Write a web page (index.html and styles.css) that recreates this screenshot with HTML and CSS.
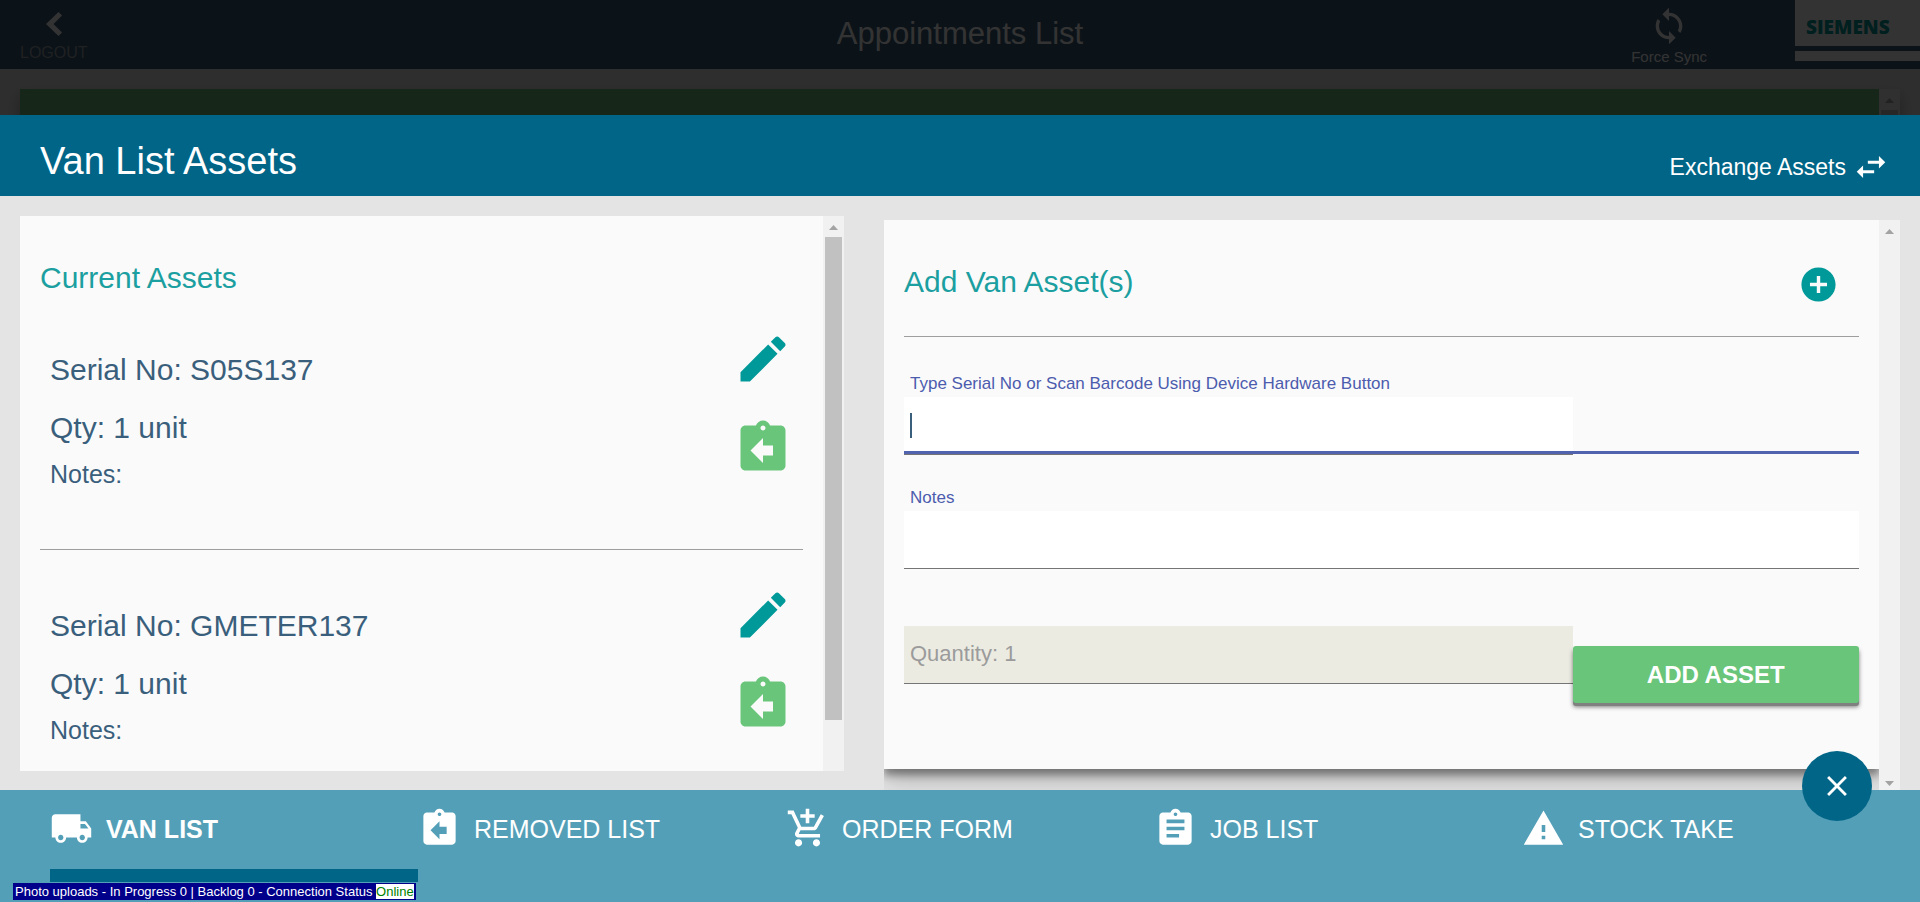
FILE: index.html
```html
<!DOCTYPE html>
<html lang="en">
<head>
<meta charset="utf-8">
<title>Van List Assets</title>
<link rel="stylesheet" href="styles.css">
</head>
<body>
<svg class="sprite" aria-hidden="true">
  <symbol id="i-edit" viewBox="0 0 24 24"><path d="M3 17.25V21h3.75L17.81 9.94l-3.75-3.75L3 17.25zM20.71 7.04c.39-.39.39-1.02 0-1.41l-2.34-2.34c-.39-.39-1.02-.39-1.41 0l-1.83 1.83 3.75 3.75 1.83-1.83z"/></symbol>
  <symbol id="i-return" viewBox="0 0 24 24"><path d="M19 3h-4.18C14.4 1.84 13.3 1 12 1c-1.3 0-2.4.84-2.82 2H5c-1.1 0-2 .9-2 2v14c0 1.1.9 2 2 2h14c1.1 0 2-.9 2-2V5c0-1.1-.9-2-2-2zm-7 0c.55 0 1 .45 1 1s-.45 1-1 1-1-.45-1-1 .45-1 1-1zm4 12h-4v3l-5-5 5-5v3h4v4z"/></symbol>
  <symbol id="i-truck" viewBox="0 0 24 24"><path d="M20 8h-3V4H3c-1.1 0-2 .9-2 2v11h2c0 1.66 1.34 3 3 3s3-1.34 3-3h6c0 1.66 1.34 3 3 3s3-1.34 3-3h2v-5l-3-4zM6 18.500c-.83 0-1.500-.67-1.500-1.500s.67-1.500 1.500-1.500 1.500.67 1.500 1.500-.67 1.500-1.500 1.500zm13.500-9l1.960 2.500H17V9.500h2.500zm-1.500 9c-.83 0-1.500-.67-1.500-1.500s.67-1.500 1.500-1.500 1.500.67 1.500 1.500-.67 1.500-1.500 1.500z"/></symbol>
  <symbol id="i-cart" viewBox="0 0 24 24"><path d="M11 9h2V6h3V4h-3V1h-2v3H8v2h3v3zm-4 9c-1.100 0-1.990.9-1.990 2S5.900 22 7 22s2-.9 2-2-.9-2-2-2zm10 0c-1.100 0-1.990.9-1.990 2s.89 2 1.990 2 2-.9 2-2-.9-2-2-2zm-9.830-3.250l.030-.120.900-1.630h7.450c.75 0 1.410-.41 1.750-1.030l3.860-7.010L19.420 4h-.010l-1.100 2-2.760 5H8.530l-.130-.270L6.160 6l-.950-2-.940-2H1v2h2l3.600 7.590-1.350 2.450c-.16.280-.25.610-.25.960 0 1.100.9 2 2 2h12v-2H7.420c-.13 0-.25-.11-.25-.25z"/></symbol>
  <symbol id="i-job" viewBox="0 0 24 24"><path d="M19 3h-4.180C14.400 1.840 13.300 1 12 1c-1.300 0-2.400.84-2.820 2H5c-1.100 0-2 .9-2 2v14c0 1.100.9 2 2 2h14c1.100 0 2-.9 2-2V5c0-1.100-.9-2-2-2zm-7 0c.55 0 1 .45 1 1s-.45 1-1 1-1-.45-1-1 .45-1 1-1zm2 14H7v-2h7v2zm3-4H7v-2h10v2zm0-4H7V7h10v2z"/></symbol>
  <symbol id="i-warning" viewBox="0 0 24 24"><path d="M1 21h22L12 2 1 21zm12-3h-2v-2h2v2zm0-4h-2v-4h2v4z"/></symbol>
  <symbol id="i-swap" viewBox="0 0 24 24"><path d="M6.990 11L3 15l3.990 4v-3H14v-2H6.990v-3zM21 9l-3.990-4v3H10v2h7.010v3L21 9z"/></symbol>
  <symbol id="i-sync" viewBox="0 0 24 24"><path d="M12 4V1L8 5l4 4V6c3.310 0 6 2.690 6 6 0 1.010-.25 1.970-.7 2.800l1.460 1.460C19.540 15.030 20 13.570 20 12c0-4.420-3.580-8-8-8zm0 14c-3.310 0-6-2.690-6-6 0-1.010.25-1.970.7-2.800L5.240 7.740C4.460 8.970 4 10.430 4 12c0 4.420 3.580 8 8 8v3l4-4-4-4v3z"/></symbol>
  <symbol id="i-add" viewBox="0 0 24 24"><path d="M12 2C6.480 2 2 6.480 2 12s4.480 10 10 10 10-4.480 10-10S17.520 2 12 2zm5 11h-4v4h-2v-4H7v-2h4V7h2v4h4v2z"/></symbol>
  <symbol id="i-close" viewBox="0 0 24 24"><path d="M19 6.410L17.590 5 12 10.590 6.410 5 5 6.410 10.590 12 5 17.590 6.410 19 12 13.410 17.590 19 19 17.590 13.410 12z"/></symbol>
  <symbol id="i-back" viewBox="0 0 16 24"><path d="M12.500 0L16 3.500 7.500 12 16 20.500 12.500 24 0 12z"/></symbol>
</svg>

<div class="app">
  <header class="app-bar">
    <button class="bar-button logout" type="button"><svg class="icon-back"><use href="#i-back"/></svg>LOGOUT</button>
    <h1 class="app-title">Appointments List</h1>
    <div class="bar-end">
      <button class="bar-button sync" type="button"><svg class="icon-sync"><use href="#i-sync"/></svg>Force Sync</button>
      <div class="brand"><span class="brand-name">SIEMENS</span><span class="brand-strip"></span></div>
    </div>
  </header>
  <div class="app-card">
    <div class="app-banner"></div>
    <div class="scrollbar"><span class="arrow-up"></span><span class="thumb thumb-full"></span></div>
  </div>
</div>
<div class="backdrop"></div>

<section class="sheet" aria-labelledby="sheet-title">
  <header class="sheet-header">
    <h2 class="sheet-title" id="sheet-title">Van List Assets</h2>
    <button class="exchange" type="button">Exchange Assets<svg class="icon-swap"><use href="#i-swap"/></svg></button>
  </header>

  <main class="panels">
    <section class="current">
      <div class="current-body">
        <h3 class="panel-title">Current Assets</h3>
        <article class="asset">
          <div class="asset-text">
            <p class="asset-line">Serial No: S05S137</p>
            <p class="asset-line">Qty: 1 unit</p>
            <p class="asset-notes">Notes:</p>
          </div>
          <div class="asset-actions">
            <button class="icon-button edit" type="button" aria-label="Edit"><svg><use href="#i-edit"/></svg></button>
            <button class="icon-button return" type="button" aria-label="Remove"><svg><use href="#i-return"/></svg></button>
          </div>
        </article>
        <article class="asset">
          <div class="asset-text">
            <p class="asset-line">Serial No: GMETER137</p>
            <p class="asset-line">Qty: 1 unit</p>
            <p class="asset-notes">Notes:</p>
          </div>
          <div class="asset-actions">
            <button class="icon-button edit" type="button" aria-label="Edit"><svg><use href="#i-edit"/></svg></button>
            <button class="icon-button return" type="button" aria-label="Remove"><svg><use href="#i-return"/></svg></button>
          </div>
        </article>
      </div>
      <div class="scrollbar"><span class="arrow-up"></span><span class="thumb"></span></div>
    </section>

    <section class="add">
      <div class="add-view">
        <form class="add-card">
          <div class="add-head">
            <h3 class="panel-title">Add Van Asset(s)</h3>
            <button class="icon-button plus" type="button" aria-label="Add"><svg><use href="#i-add"/></svg></button>
          </div>
          <div class="field">
            <label class="label" for="serial">Type Serial No or Scan Barcode Using Device Hardware Button</label>
            <div class="focus-line">
              <input class="input input-short" id="serial" type="text">
              <span class="caret"></span>
            </div>
          </div>
          <div class="field">
            <label class="label" for="notes">Notes</label>
            <input class="input" id="notes" type="text">
          </div>
          <div class="submit-row">
            <input class="input quantity" type="text" value="Quantity: 1" aria-label="Quantity" disabled>
            <button class="submit" type="button">ADD ASSET</button>
          </div>
        </form>
      </div>
      <div class="scrollbar"><span class="arrow-up"></span><span class="arrow-down"></span></div>
    </section>
  </main>

  <nav class="tabs">
    <button class="fab" type="button" aria-label="Close"><svg><use href="#i-close"/></svg></button>
    <a class="tab tab-active" href="#van"><svg><use href="#i-truck"/></svg>VAN LIST</a>
    <a class="tab" href="#removed"><svg><use href="#i-return"/></svg>REMOVED LIST</a>
    <a class="tab" href="#order"><svg><use href="#i-cart"/></svg>ORDER FORM</a>
    <a class="tab" href="#job"><svg><use href="#i-job"/></svg>JOB LIST</a>
    <a class="tab" href="#stock"><svg><use href="#i-warning"/></svg>STOCK TAKE</a>
  </nav>
</section>

<div class="status">Photo uploads - In Progress 0 | Backlog 0 - Connection Status <span class="online">Online</span></div>
</body>
</html>
```
FILE: styles.css
```css
* { box-sizing: border-box; }

body {
  margin: 0;
  height: 100vh;
  overflow: hidden;
  background: #e6e6e6;
  font-family: "Liberation Sans", Arial, sans-serif;
  color: #3a5f7c;
}

h1, h2, h3, p { margin: 0; font-weight: 400; }

button {
  padding: 0;
  border: 0;
  background: none;
  font-family: inherit;
  color: inherit;
}

svg { display: block; fill: currentColor; }
.sprite { display: none; }

/* Page behind the sheet */
.app-bar {
  display: grid;
  grid-template-columns: 1fr auto 1fr;
  height: 69px;
  background: #375a78;
  color: #fff;
}

.bar-button {
  display: flex;
  flex-direction: column;
  align-items: center;
  justify-self: start;
}

.logout {
  padding: 12px 20px 0;
  gap: 8px;
  font-size: 16px;
  line-height: 18px;
  color: #9aa3a8;
}

.icon-back { width: 16px; height: 24px; color: #fff; }
.app-title { font-size: 31px; line-height: 68px; }
.bar-end { display: flex; justify-content: flex-end; gap: 88px; }
.sync { padding-top: 6px; gap: 2px; font-size: 15px; line-height: 18px; }
.icon-sync { width: 40px; height: 40px; }

.brand { display: flex; flex-direction: column; gap: 5px; width: 125px; }

.brand-name {
  height: 46px;
  padding-left: 11px;
  background: #fff;
  font-family: "Open Sans", "Noto Sans", sans-serif;
  font-size: 19px;
  font-weight: 800;
  line-height: 54px;
  color: #009999;
}

.brand-strip { height: 10px; background: #fff; }

.app-card {
  display: flex;
  height: 400px;
  margin: 20px;
  box-shadow: 0 8px 14px rgba(0, 0, 0, 0.3);
}

.app-banner { flex: 1; background: #6ec382; }

.backdrop { position: fixed; inset: 0; background: rgba(0, 0, 0, 0.8); }

/* Sheet */
.sheet {
  position: fixed;
  inset: 115px 0 0;
  display: flex;
  flex-direction: column;
  background: #e4e4e4;
}

.sheet-header {
  display: flex;
  flex: none;
  justify-content: space-between;
  align-items: flex-end;
  height: 81px;
  padding: 0 30px 10px 40px;
  background: #006587;
  color: #fff;
}

.sheet-title { font-size: 38px; line-height: 50px; }

.exchange {
  display: flex;
  align-items: center;
  gap: 6px;
  font-size: 23px;
  line-height: 36px;
}

.icon-swap { width: 38px; height: 38px; }

.panels {
  display: grid;
  grid-template-columns: 103fr 127fr;
  grid-template-rows: minmax(0, 1fr);
  gap: 40px;
  flex: 1;
  min-height: 0;
  padding: 0 20px;
}

.panel-title { font-size: 30px; line-height: 36px; color: #1b9fa0; }

.current {
  display: flex;
  margin: 20px 0 19px;
  overflow: hidden;
  background: #fafafa;
}

.current-body { flex: 1; padding: 44px 20px 0; }

.asset {
  display: flex;
  justify-content: space-between;
  height: 256px;
  padding: 0 10px;
  border-bottom: 1px solid #9e9e9e;
}

.current .panel-title { margin-bottom: -2px; }
.asset-text { padding-top: 47px; }
.asset-line { font-size: 30px; line-height: 58px; }
.asset-notes { font-size: 25px; line-height: 34px; }

.asset-actions {
  display: flex;
  flex-direction: column;
  gap: 29px;
  padding-top: 35px;
}

.icon-button svg { width: 60px; height: 60px; }
.edit { color: #009999; }
.return { color: #69c57a; }

/* Scrollbars */
.scrollbar {
  display: flex;
  flex: none;
  flex-direction: column;
  align-items: center;
  width: 21px;
  background: #f1f1f1;
}

.arrow-up, .arrow-down {
  flex: none;
  width: 9px;
  height: 5px;
  background: #a3a3a3;
}

.arrow-up { margin: 9px 0 7px; clip-path: polygon(50% 0, 100% 100%, 0 100%); }
.arrow-down { margin: auto 0 4px; clip-path: polygon(0 0, 100% 0, 50% 100%); }
.thumb { width: 17px; height: 87%; background: #c1c1c1; }
.thumb-full { height: 100%; }

/* Add form */
.add { display: flex; margin-top: 24px; }
.add-view { flex: 1; overflow: hidden; }

.add-card {
  padding: 0 20px 66px;
  background: #fafafa;
  box-shadow: 0 6px 8px rgba(0, 0, 0, 0.4), 0 12px 24px rgba(0, 0, 0, 0.2);
}

.add-head {
  display: flex;
  justify-content: space-between;
  align-items: flex-start;
  height: 117px;
  padding: 44px 20px 0 0;
  border-bottom: 1px solid #9e9e9e;
  margin-bottom: 34px;
}

.plus { color: #009999; }
.plus svg { width: 41px; height: 41px; }

.field { margin-bottom: 30px; }

.label {
  display: block;
  padding-left: 6px;
  font-size: 17px;
  line-height: 26px;
  color: #4c5cae;
}

.input {
  display: block;
  width: 100%;
  height: 58px;
  padding: 0 6px 2px;
  border: 0;
  border-bottom: 1px solid #757575;
  border-radius: 0;
  outline: 0;
  background: #fff;
  font-family: inherit;
  font-size: 22px;
  color: #3a5f7c;
}

.input-short { width: 70%; }

.focus-line { position: relative; }

.focus-line::after {
  content: "";
  position: absolute;
  inset: auto 0 1px;
  height: 3px;
  background: #5162af;
}

.caret {
  position: absolute;
  top: 16px;
  left: 6px;
  width: 2px;
  height: 25px;
  background: #3a5f7c;
}

.submit-row {
  display: grid;
  grid-template-columns: 70% 30%;
  align-items: start;
  margin-top: 57px;
}

.quantity { background: #ebebe2; color: #9b9b9b; }

.submit {
  height: 57px;
  margin-top: 20px;
  border-radius: 3px;
  background: #69c57a;
  box-shadow: 0 3px 0 #808080, 0 4px 4px rgba(0, 0, 0, 0.5);
  font-size: 24px;
  font-weight: 700;
  color: #fff;
}

/* Bottom tabs */
.tabs {
  position: relative;
  display: grid;
  grid-template-columns: repeat(5, 1fr);
  flex: none;
  height: 112px;
  padding: 0 30px 20px 50px;
  background: #549fb8;
}

.tab {
  display: flex;
  align-items: flex-start;
  gap: 13px;
  padding-top: 17px;
  border-bottom: 13px solid transparent;
  font-size: 25px;
  line-height: 44px;
  color: #fff;
  text-decoration: none;
}

.tab svg { width: 43px; height: 43px; }
.tab-active { border-color: #006587; font-weight: 700; }

.fab {
  position: absolute;
  top: -39px;
  right: 48px;
  display: flex;
  align-items: center;
  justify-content: center;
  width: 70px;
  height: 70px;
  border-radius: 50%;
  background: #006587;
  color: #fff;
}

.fab svg { width: 34px; height: 34px; }

/* Connection status */
.status {
  position: fixed;
  left: 13px;
  bottom: 2px;
  padding: 0 2px;
  background: #00008b;
  font-size: 13px;
  line-height: 17px;
  color: #fff;
}

.online { background: #fff; color: #008000; }
```
